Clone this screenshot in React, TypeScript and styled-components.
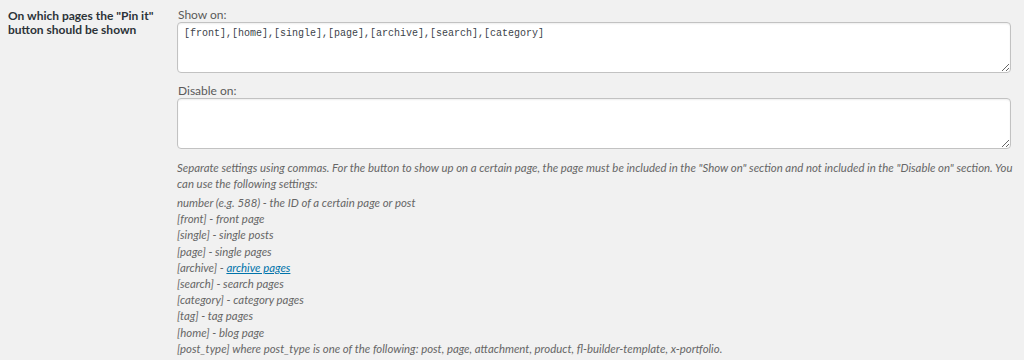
import React from "react";
import styled, { createGlobalStyle } from "styled-components";

const GlobalStyle = createGlobalStyle`
  html, body {
    margin: 0;
    padding: 0;
    background: #f1f1f1;
  }
  body {
    font-family: "Lato", "Liberation Sans", sans-serif;
    color: #23282d;
  }
`;

const Row = styled.div`
  display: flex;
  padding: 8px 13px 0 8px;
`;

const Heading = styled.div`
  width: 150px;
  flex-shrink: 0;
  margin-right: 19px;
  padding-top: 1px;
  font-size: 12px;
  font-weight: 700;
  line-height: 14px;
  color: #2c3338;
`;

const Field = styled.div`
  flex: 1;
  display: flex;
  flex-direction: column;
`;

const FieldLabel = styled.div`
  font-size: 12px;
  line-height: 14px;
  color: #5a5a5a;
  padding-left: 1px;
`;

const TextArea = styled.textarea`
  box-sizing: border-box;
  width: 100%;
  height: 51px;
  margin: 0 0 11px;
  padding: 4px 6px;
  border: 1px solid #c2c2c2;
  border-radius: 4px;
  background: #fff;
  box-shadow: inset 0 1px 2px rgba(0, 0, 0, 0.07);
  font-family: "Liberation Mono", monospace;
  font-size: 10px;
  line-height: 14px;
  color: #3c434a;
  resize: vertical;
  outline: none;
`;

const Description = styled.p`
  margin: 0 -10px 3px 0;
  font-size: 11.4px;
  font-style: italic;
  line-height: 16px;
  color: #666;
`;

const SettingList = styled.div`
  display: flex;
  flex-direction: column;
`;

const SettingItem = styled.div`
  font-size: 11.4px;
  font-style: italic;
  line-height: 16.2px;
  color: #666;
`;

const Link = styled.a`
  color: #0073aa;
  text-decoration: underline;
`;

const settings: { key: string; text: React.ReactNode }[] = [
  { key: "number", text: "number (e.g. 588) - the ID of a certain page or post" },
  { key: "front", text: "[front] - front page" },
  { key: "single", text: "[single] - single posts" },
  { key: "page", text: "[page] - single pages" },
  {
    key: "archive",
    text: (
      <>
        [archive] - <Link href="#">archive pages</Link>
      </>
    ),
  },
  { key: "search", text: "[search] - search pages" },
  { key: "category", text: "[category] - category pages" },
  { key: "tag", text: "[tag] - tag pages" },
  { key: "home", text: "[home] - blog page" },
  {
    key: "post_type",
    text: "[post_type] where post_type is one of the following: post, page, attachment, product, fl-builder-template, x-portfolio.",
  },
];

export default function App() {
  return (
    <>
      <GlobalStyle />
      <Row>
        <Heading>On which pages the "Pin it" button should be shown</Heading>
        <Field>
          <FieldLabel>Show on:</FieldLabel>
          <TextArea
            defaultValue="[front],[home],[single],[page],[archive],[search],[category]"
          />
          <FieldLabel>Disable on:</FieldLabel>
          <TextArea defaultValue="" />
          <Description>
            Separate settings using commas. For the button to show up on a certain page, the page must be
            included in the "Show on" section and not included in the "Disable on" section. You can use the
            following settings:
          </Description>
          <SettingList>
            {settings.map((s) => (
              <SettingItem key={s.key}>{s.text}</SettingItem>
            ))}
          </SettingList>
        </Field>
      </Row>
    </>
  );
}
